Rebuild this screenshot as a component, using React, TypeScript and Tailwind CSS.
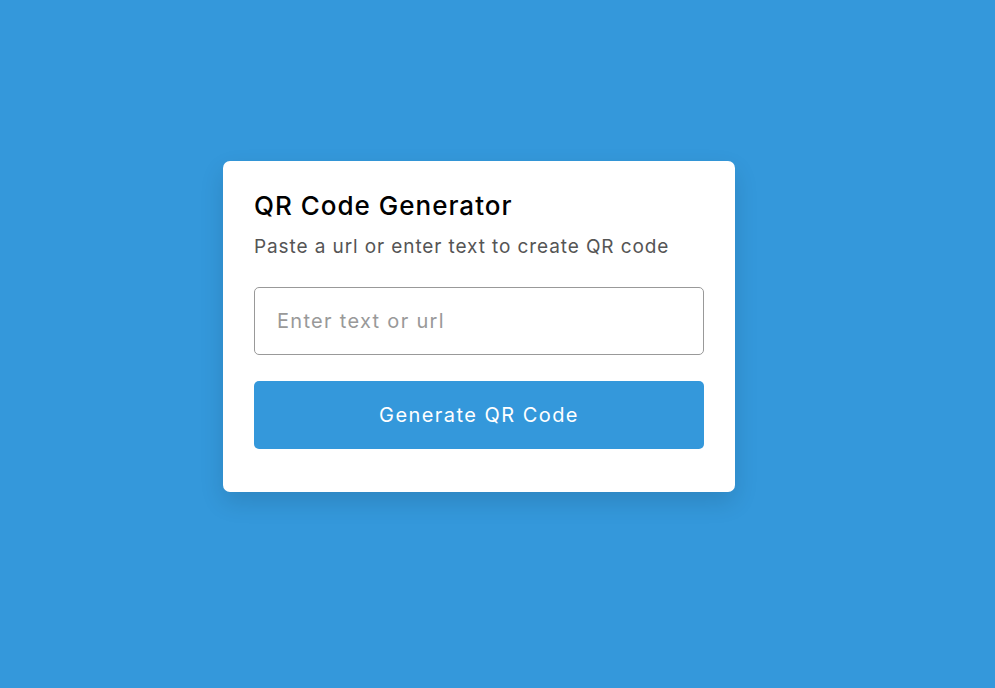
export default function App() {
  return (
    <div
      className="w-full h-[688px] bg-[#3498db] flex items-center justify-center pb-[35px] pr-[37px]"
      style={{ fontFamily: "Inter, 'Noto Sans', sans-serif" }}
    >
      <div className="w-[512px] shrink-0 bg-white rounded-[7px] px-[31px] pt-[27px] pb-[43px] shadow-[0_10px_25px_rgba(0,0,0,0.12)]">
        <h1 className="text-[26px] leading-[36px] font-medium text-black tracking-[1px]">QR Code Generator</h1>
        <p className="text-[19px] leading-[28px] text-[#555] mt-[9px] tracking-[0.9px]">
          Paste a url or enter text to create QR code
        </p>
        <input
          type="text"
          placeholder="Enter text or url"
          className="block mt-[26px] w-full h-[68px] border border-[#999] rounded-[5px] px-[22px] text-[20px] tracking-[1.3px] outline-none placeholder:text-[#999]"
        />
        <button className="block mt-[26px] w-full h-[68px] bg-[#3498db] rounded-[5px] text-white text-[20px] tracking-[1.45px]">
          Generate QR Code
        </button>
      </div>
    </div>
  );
}
